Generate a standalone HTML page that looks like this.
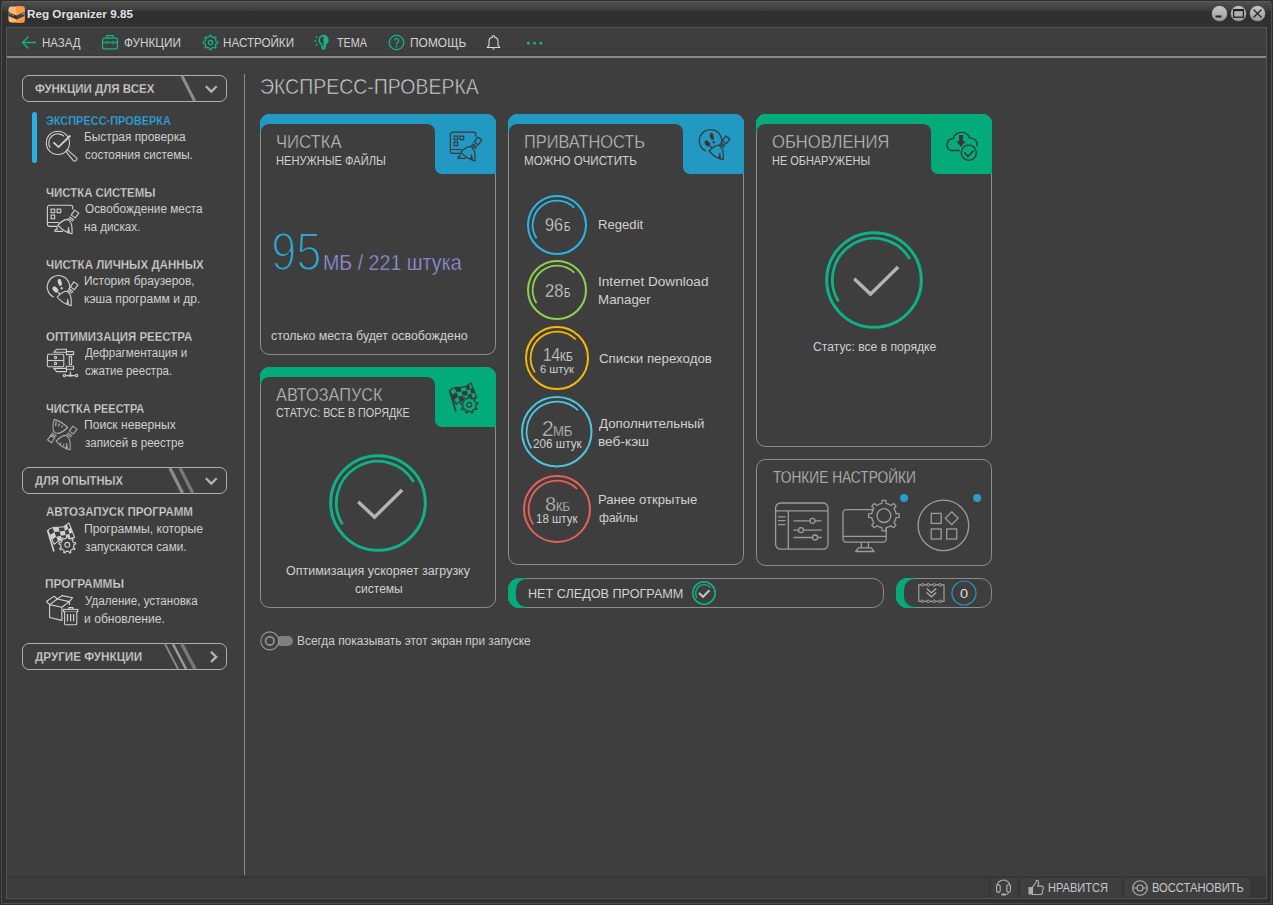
<!DOCTYPE html><html><head><meta charset="utf-8"><style>*{margin:0;padding:0;box-sizing:border-box}
html,body{width:1273px;height:905px;overflow:hidden;background:#303030;font-family:"Liberation Sans",sans-serif}
.a{position:absolute}
.t{position:absolute;white-space:nowrap;line-height:1}
svg{overflow:visible}
</style></head><body>
<div class="a" style="left:0px;top:0px;width:1273px;height:905px;background:#2c2c2c;border-radius:5px 5px 0 0"></div>
<div class="a" style="left:1px;top:1px;width:1271px;height:903px;background:#303030;border:1px solid #4c4c4c;border-radius:4px 4px 0 0"></div>
<div class="a" style="left:2px;top:1px;width:1269px;height:1px;background:#5a5a5a;border-radius:3px 3px 0 0"></div>
<div class="a" style="left:2px;top:2px;width:1269px;height:9px;background:linear-gradient(#505050,#3a3a3a)"></div>
<div class="a" style="left:6px;top:27px;width:1261px;height:872px;background:#3e3e3e;border:1px solid #545454"></div>
<svg class="a" style="left:8px;top:6px;" width="17" height="17" viewBox="0 0 17 17"><rect x="0.5" y="0.5" width="16" height="16" rx="3" fill="#ffb977"/>
<rect x="8.5" y="0.5" width="8" height="16" fill="#ff9a3c"/><path d="M8.5 0.5h5a3 3 0 0 1 3 3v10a3 3 0 0 1-3 3h-5z" fill="#ff9a3c"/>
<path d="M0.5 6 L8.5 9.5 L16.5 6 V10 L8.5 13.5 L0.5 10Z" fill="#3a3a3a"/>
<circle cx="2.5" cy="8" r="0.9" fill="#20c080"/><circle cx="5" cy="9.2" r="0.9" fill="#ff5040"/><circle cx="7" cy="10.2" r="0.7" fill="#222"/>
<circle cx="11" cy="10" r="0.6" fill="#666"/><circle cx="13" cy="9" r="0.6" fill="#666"/><circle cx="15" cy="8" r="0.9" fill="#30b0ff"/></svg>
<div class="t" style="left:27.40px;top:9.00px;font-size:11.0px;color:#dfe3e6;font-weight:bold;transform:scaleX(1.0630);transform-origin:0 0;">Reg Organizer 9.85</div>
<svg class="a" style="left:1211.0px;top:5px;" width="17" height="17" viewBox="0 0 17 17"><defs><linearGradient id="wg0" x1="0" y1="0" x2="0" y2="1"><stop offset="0" stop-color="#c8c8c8"/><stop offset="1" stop-color="#9a9a9a"/></linearGradient></defs><circle cx="8.5" cy="8.5" r="8" fill="url(#wg0)" stroke="#2a2a2a" stroke-width="0.6"/></svg>
<svg class="a" style="left:1230.0px;top:5px;" width="17" height="17" viewBox="0 0 17 17"><defs><linearGradient id="wg1" x1="0" y1="0" x2="0" y2="1"><stop offset="0" stop-color="#c8c8c8"/><stop offset="1" stop-color="#9a9a9a"/></linearGradient></defs><circle cx="8.5" cy="8.5" r="8" fill="url(#wg1)" stroke="#2a2a2a" stroke-width="0.6"/></svg>
<svg class="a" style="left:1249.0px;top:5px;" width="17" height="17" viewBox="0 0 17 17"><defs><linearGradient id="wg2" x1="0" y1="0" x2="0" y2="1"><stop offset="0" stop-color="#c8c8c8"/><stop offset="1" stop-color="#9a9a9a"/></linearGradient></defs><circle cx="8.5" cy="8.5" r="8" fill="url(#wg2)" stroke="#2a2a2a" stroke-width="0.6"/></svg>
<svg class="a" style="left:1211px;top:5px;" width="17" height="17" viewBox="0 0 17 17"><rect x="4.5" y="10.5" width="6" height="2" fill="#222"/></svg>
<svg class="a" style="left:1230px;top:5px;" width="17" height="17" viewBox="0 0 17 17"><rect x="3.6" y="4.6" width="9.8" height="7.6" fill="none" stroke="#222" stroke-width="1.3"/><rect x="3.6" y="4.6" width="9.8" height="1.6" fill="#222"/></svg>
<svg class="a" style="left:1249px;top:5px;" width="17" height="17" viewBox="0 0 17 17"><path d="M4.5 4.5L12.5 12.5M12.5 4.5L4.5 12.5" stroke="#222" stroke-width="1.3"/></svg>
<div class="a" style="left:7px;top:55px;width:1259px;height:1px;background:#393939"></div>
<div class="a" style="left:7px;top:56px;width:1259px;height:2px;background:#8a8a8a"></div>
<svg class="a" style="left:21px;top:35px;" width="16" height="16" viewBox="0 0 16 16"><path d="M1.5 7.5H15M7.5 1.5L1.5 7.5L7.5 13.5" fill="none" stroke="#16b386" stroke-width="1.3"/></svg>
<div class="t" style="left:42.22px;top:36.00px;font-size:13.0px;color:#d2d2d2;transform:scaleX(0.8814);transform-origin:0 0;">НАЗАД</div>
<svg class="a" style="left:101px;top:33px;" width="18" height="17" viewBox="0 0 18 17"><rect x="1.6" y="5.1" width="14.8" height="10.8" rx="1.5" fill="none" stroke="#16b386" stroke-width="1.3"/><path d="M6 5V2.6h6V5" fill="none" stroke="#16b386" stroke-width="1.3"/><path d="M1.6 9.5H16.4" stroke="#16b386" stroke-width="1.3"/><circle cx="6" cy="9.5" r="1.2" fill="#3e3e3e" stroke="#16b386" stroke-width="1"/><circle cx="12" cy="9.5" r="1.2" fill="#3e3e3e" stroke="#16b386" stroke-width="1"/></svg>
<div class="t" style="left:124.00px;top:36.00px;font-size:13.0px;color:#d2d2d2;transform:scaleX(0.9048);transform-origin:0 0;">ФУНКЦИИ</div>
<svg class="a" style="left:202px;top:34px;" width="17" height="17" viewBox="0 0 17 17"><path d="M13.97 7.28 L15.64 7.54 L15.64 9.46 L13.97 9.72 L13.23 11.50 L14.22 12.87 L12.87 14.22 L11.50 13.23 L9.72 13.97 L9.46 15.64 L7.54 15.64 L7.28 13.97 L5.50 13.23 L4.13 14.22 L2.78 12.87 L3.77 11.50 L3.03 9.72 L1.36 9.46 L1.36 7.54 L3.03 7.28 L3.77 5.50 L2.78 4.13 L4.13 2.78 L5.50 3.77 L7.28 3.03 L7.54 1.36 L9.46 1.36 L9.72 3.03 L11.50 3.77 L12.87 2.78 L14.22 4.13 L13.23 5.50Z" fill="none" stroke="#16b386" stroke-width="1.2" stroke-linejoin="round"/><circle cx="8.5" cy="8.5" r="2.2" fill="none" stroke="#16b386" stroke-width="1.2"/></svg>
<div class="t" style="left:223.11px;top:36.00px;font-size:13.0px;color:#d2d2d2;transform:scaleX(0.8936);transform-origin:0 0;">НАСТРОЙКИ</div>
<svg class="a" style="left:313px;top:34px;" width="18" height="17" viewBox="0 0 18 17"><path d="M10.5 1.5a4.6 4.6 0 0 1 2.6 8.3c-.5.4-.8 1-.8 1.6V13h-3.6v-1.6c0-.6-.3-1.2-.8-1.6a4.6 4.6 0 0 1 2.6-8.3z" fill="none" stroke="#16b386" stroke-width="1.3"/><path d="M10.5 1.5a4.6 4.6 0 0 1 2.6 8.3c-.5.4-.8 1-.8 1.6V13h-1.8z" fill="#16b386"/><rect x="8.7" y="13.8" width="3.6" height="1.8" rx=".8" fill="#16b386"/><circle cx="3.5" cy="3" r=".9" fill="#16b386"/><circle cx="2.3" cy="7" r=".9" fill="#16b386"/><circle cx="3.5" cy="11" r=".9" fill="#16b386"/></svg>
<div class="t" style="left:337.00px;top:36.00px;font-size:13.0px;color:#d2d2d2;transform:scaleX(0.8333);transform-origin:0 0;">ТЕМА</div>
<svg class="a" style="left:388px;top:34px;" width="17" height="17" viewBox="0 0 17 17"><circle cx="8.5" cy="8.5" r="7.2" fill="none" stroke="#16b386" stroke-width="1.3"/><path d="M6.3 6.6a2.2 2.2 0 1 1 3.3 1.9c-.7.4-1.1.9-1.1 1.7v.6" fill="none" stroke="#16b386" stroke-width="1.3"/><circle cx="8.5" cy="12.6" r=".9" fill="#16b386"/></svg>
<div class="t" style="left:409.68px;top:36.00px;font-size:13.0px;color:#d2d2d2;transform:scaleX(0.9200);transform-origin:0 0;">ПОМОЩЬ</div>
<svg class="a" style="left:486px;top:34px;" width="15" height="17" viewBox="0 0 15 17"><path d="M7.5 1.5a1 1 0 0 1 1 1v.6a4.5 4.5 0 0 1 3.5 4.4v3.8l1.8 2.2H1.2L3 11.3V7.5a4.5 4.5 0 0 1 3.5-4.4v-.6a1 1 0 0 1 1-1z" fill="none" stroke="#d8d8d8" stroke-width="1.1" stroke-linejoin="round"/><path d="M6 14.5h3l-1.5 1.6z" fill="#d8d8d8"/></svg>
<svg class="a" style="left:524px;top:38px;" width="22" height="10" viewBox="0 0 22 10"><circle cx="4.2999999999999545" cy="5.2" r="1.45" fill="#16b386"/><circle cx="10.600000000000023" cy="5.2" r="1.45" fill="#16b386"/><circle cx="16.899999999999977" cy="5.2" r="1.45" fill="#16b386"/></svg>
<div class="a" style="left:244px;top:74px;width:1px;height:801px;background:#8a8a8a"></div>
<div class="a" style="left:22px;top:75px;width:205px;height:27px;border:1px solid #b0b0b0;border-radius:7px"></div>
<div class="t" style="left:35.40px;top:82.00px;font-size:13.0px;color:#d6d6d6;font-weight:bold;-webkit-text-stroke:0.3px #3e3e3e;transform:scaleX(0.8859);transform-origin:0 0;">ФУНКЦИИ ДЛЯ ВСЕХ</div>
<svg class="a" style="left:22px;top:75px;" width="205" height="27" viewBox="0 0 205 27"><path d="M160 1L172.6 26" stroke="#8c8c8c" stroke-width="3"/><path d="M183.9 11.299999999999997L189.3 16.599999999999994L194.7 11.299999999999997" fill="none" stroke="#b4b4b4" stroke-width="2.3"/></svg>
<div class="a" style="left:22px;top:467px;width:205px;height:27px;border:1px solid #b0b0b0;border-radius:7px"></div>
<div class="t" style="left:35.40px;top:474.00px;font-size:13.0px;color:#d6d6d6;font-weight:bold;-webkit-text-stroke:0.3px #3e3e3e;transform:scaleX(0.8592);transform-origin:0 0;">ДЛЯ ОПЫТНЫХ</div>
<svg class="a" style="left:22px;top:467px;" width="205" height="27" viewBox="0 0 205 27"><path d="M147.9 1L160.5 26" stroke="#8c8c8c" stroke-width="3.2"/><path d="M158 1L170.7 26" stroke="#787878" stroke-width="3.2"/><path d="M183.9 11.299999999999997L189.3 16.599999999999994L194.7 11.299999999999997" fill="none" stroke="#b4b4b4" stroke-width="2.3"/></svg>
<div class="a" style="left:22px;top:643px;width:205px;height:27px;border:1px solid #b0b0b0;border-radius:7px"></div>
<div class="t" style="left:35.40px;top:650.00px;font-size:13.0px;color:#d6d6d6;font-weight:bold;-webkit-text-stroke:0.3px #3e3e3e;transform:scaleX(0.8992);transform-origin:0 0;">ДРУГИЕ ФУНКЦИИ</div>
<svg class="a" style="left:22px;top:643px;" width="205" height="27" viewBox="0 0 205 27"><path d="M143 1L156 26" stroke="#8a8a8a" stroke-width="1.8"/><path d="M151 1L164 26" stroke="#9a9a9a" stroke-width="2.5"/><path d="M159.8 1L173 26" stroke="#777777" stroke-width="3.5"/><path d="M189 8.799999999999955L194.2 13.899999999999977L189 18.899999999999977" fill="none" stroke="#b4b4b4" stroke-width="2.3"/></svg>
<div class="a" style="left:32px;top:112px;width:5px;height:51px;background:#29aee6;border-radius:3px"></div>
<div class="t" style="left:46.30px;top:114.00px;font-size:13.0px;color:#2aa9e3;font-weight:bold;-webkit-text-stroke:0.3px #3e3e3e;transform:scaleX(0.8426);transform-origin:0 0;">ЭКСПРЕСС-ПРОВЕРКА</div>
<div class="t" style="left:83.55px;top:131.00px;font-size:12.5px;color:#cfcfcf;transform:scaleX(0.9500);transform-origin:0 0;">Быстрая проверка</div>
<div class="t" style="left:84.50px;top:149.00px;font-size:12.5px;color:#cfcfcf;transform:scaleX(0.9284);transform-origin:0 0;">состояния системы.</div>
<div class="t" style="left:46.30px;top:186.00px;font-size:13.0px;color:#d6d6d6;font-weight:bold;-webkit-text-stroke:0.3px #3e3e3e;transform:scaleX(0.8790);transform-origin:0 0;">ЧИСТКА СИСТЕМЫ</div>
<div class="t" style="left:84.50px;top:203.00px;font-size:12.5px;color:#cfcfcf;transform:scaleX(0.9440);transform-origin:0 0;">Освобождение места</div>
<div class="t" style="left:83.56px;top:221.00px;font-size:12.5px;color:#cfcfcf;transform:scaleX(0.9356);transform-origin:0 0;">на дисках.</div>
<div class="t" style="left:46.30px;top:258.00px;font-size:13.0px;color:#d6d6d6;font-weight:bold;-webkit-text-stroke:0.3px #3e3e3e;transform:scaleX(0.8899);transform-origin:0 0;">ЧИСТКА ЛИЧНЫХ ДАННЫХ</div>
<div class="t" style="left:83.54px;top:275.00px;font-size:12.5px;color:#cfcfcf;transform:scaleX(0.9561);transform-origin:0 0;">История браузеров,</div>
<div class="t" style="left:83.53px;top:293.00px;font-size:12.5px;color:#cfcfcf;transform:scaleX(0.9664);transform-origin:0 0;">кэша программ и др.</div>
<div class="t" style="left:46.30px;top:330.00px;font-size:13.0px;color:#d6d6d6;font-weight:bold;-webkit-text-stroke:0.3px #3e3e3e;transform:scaleX(0.8795);transform-origin:0 0;">ОПТИМИЗАЦИЯ РЕЕСТРА</div>
<div class="t" style="left:84.50px;top:347.00px;font-size:12.5px;color:#cfcfcf;transform:scaleX(0.9243);transform-origin:0 0;">Дефрагментация и</div>
<div class="t" style="left:84.50px;top:365.00px;font-size:12.5px;color:#cfcfcf;transform:scaleX(0.9191);transform-origin:0 0;">сжатие реестра.</div>
<div class="t" style="left:46.30px;top:402.00px;font-size:13.0px;color:#d6d6d6;font-weight:bold;-webkit-text-stroke:0.3px #3e3e3e;transform:scaleX(0.8448);transform-origin:0 0;">ЧИСТКА РЕЕСТРА</div>
<div class="t" style="left:83.53px;top:419.00px;font-size:12.5px;color:#cfcfcf;transform:scaleX(0.9710);transform-origin:0 0;">Поиск неверных</div>
<div class="t" style="left:84.50px;top:437.00px;font-size:12.5px;color:#cfcfcf;transform:scaleX(0.9252);transform-origin:0 0;">записей в реестре</div>
<div class="t" style="left:46.30px;top:505.00px;font-size:13.0px;color:#d6d6d6;font-weight:bold;-webkit-text-stroke:0.3px #3e3e3e;transform:scaleX(0.8873);transform-origin:0 0;">АВТОЗАПУСК ПРОГРАММ</div>
<div class="t" style="left:83.52px;top:523.00px;font-size:12.5px;color:#cfcfcf;transform:scaleX(0.9752);transform-origin:0 0;">Программы, которые</div>
<div class="t" style="left:84.50px;top:541.00px;font-size:12.5px;color:#cfcfcf;transform:scaleX(0.9411);transform-origin:0 0;">запускаются сами.</div>
<div class="t" style="left:45.39px;top:577.00px;font-size:13.0px;color:#d6d6d6;font-weight:bold;-webkit-text-stroke:0.3px #3e3e3e;transform:scaleX(0.9118);transform-origin:0 0;">ПРОГРАММЫ</div>
<div class="t" style="left:84.50px;top:595.00px;font-size:12.5px;color:#cfcfcf;transform:scaleX(0.9281);transform-origin:0 0;">Удаление, установка</div>
<div class="t" style="left:83.53px;top:613.00px;font-size:12.5px;color:#cfcfcf;transform:scaleX(0.9695);transform-origin:0 0;">и обновление.</div>
<div class="t" style="left:259.74px;top:75.00px;font-size:22.75px;color:#d4d4d4;-webkit-text-stroke:0.6px #3e3e3e;transform:scaleX(0.8559);transform-origin:0 0;">ЭКСПРЕСС-ПРОВЕРКА</div>
<svg class="a" style="left:260px;top:114px;" width="236" height="241" viewBox="0 0 236 241"><rect x="0.5" y="0.5" width="235" height="240" rx="9" fill="#3e3e3e" stroke="#8c8c8c" stroke-width="1"/><path d="M0 18V9A9 9 0 0 1 9 0H227A9 9 0 0 1 236 9V60H182A7 7 0 0 1 175 53V18A8 8 0 0 0 167 10H9A8 8 0 0 0 1 18Z" fill="#2299c2"/></svg>
<svg class="a" style="left:508px;top:114px;" width="236" height="451" viewBox="0 0 236 451"><rect x="0.5" y="0.5" width="235" height="450" rx="9" fill="#3e3e3e" stroke="#8c8c8c" stroke-width="1"/><path d="M0 18V9A9 9 0 0 1 9 0H227A9 9 0 0 1 236 9V60H182A7 7 0 0 1 175 53V18A8 8 0 0 0 167 10H9A8 8 0 0 0 1 18Z" fill="#2299c2"/></svg>
<svg class="a" style="left:756px;top:114px;" width="236" height="333" viewBox="0 0 236 333"><rect x="0.5" y="0.5" width="235" height="332" rx="9" fill="#3e3e3e" stroke="#8c8c8c" stroke-width="1"/><path d="M0 18V9A9 9 0 0 1 9 0H227A9 9 0 0 1 236 9V60H182A7 7 0 0 1 175 53V18A8 8 0 0 0 167 10H9A8 8 0 0 0 1 18Z" fill="#03aa7a"/></svg>
<svg class="a" style="left:260px;top:367px;" width="236" height="241" viewBox="0 0 236 241"><rect x="0.5" y="0.5" width="235" height="240" rx="9" fill="#3e3e3e" stroke="#8c8c8c" stroke-width="1"/><path d="M0 18V9A9 9 0 0 1 9 0H227A9 9 0 0 1 236 9V60H182A7 7 0 0 1 175 53V18A8 8 0 0 0 167 10H9A8 8 0 0 0 1 18Z" fill="#03aa7a"/></svg>
<svg class="a" style="left:756px;top:459px;" width="236" height="107" viewBox="0 0 236 107"><rect x="0.5" y="0.5" width="235" height="106" rx="9" fill="#3e3e3e" stroke="#8c8c8c" stroke-width="1"/></svg>
<div class="t" style="left:275.82px;top:132.00px;font-size:19.0px;color:#d0d0d0;-webkit-text-stroke:0.5px #3e3e3e;transform:scaleX(0.8784);transform-origin:0 0;">ЧИСТКА</div>
<div class="t" style="left:275.81px;top:155.00px;font-size:12.5px;color:#d0d0d0;transform:scaleX(0.8886);transform-origin:0 0;">НЕНУЖНЫЕ ФАЙЛЫ</div>
<div class="t" style="left:271.21px;top:225.00px;font-size:53.75px;color:#2ea6cf;-webkit-text-stroke:2px #3e3e3e;transform:scaleX(0.8464);transform-origin:0 0;">95</div>
<div class="t" style="left:322.91px;top:252.00px;font-size:22.0px;color:#a09cec;-webkit-text-stroke:0.5px #3e3e3e;transform:scaleX(0.8928);transform-origin:0 0;">МБ / 221 штука</div>
<div class="t" style="left:271.30px;top:329.00px;font-size:13.0px;color:#d0d0d0;transform:scaleX(0.9498);transform-origin:0 0;">столько места будет освобождено</div>
<div class="t" style="left:523.61px;top:133.00px;font-size:18.5px;color:#d0d0d0;-webkit-text-stroke:0.5px #3e3e3e;transform:scaleX(0.8853);transform-origin:0 0;">ПРИВАТНОСТЬ</div>
<div class="t" style="left:523.57px;top:155.00px;font-size:12.5px;color:#d0d0d0;transform:scaleX(0.9283);transform-origin:0 0;">МОЖНО ОЧИСТИТЬ</div>
<div class="t" style="left:771.50px;top:133.00px;font-size:18.5px;color:#d0d0d0;-webkit-text-stroke:0.5px #3e3e3e;transform:scaleX(0.8961);transform-origin:0 0;">ОБНОВЛЕНИЯ</div>
<div class="t" style="left:771.53px;top:155.00px;font-size:12.5px;color:#d0d0d0;transform:scaleX(0.8748);transform-origin:0 0;">НЕ ОБНАРУЖЕНЫ</div>
<div class="t" style="left:276.40px;top:386.00px;font-size:18.5px;color:#d0d0d0;-webkit-text-stroke:0.5px #3e3e3e;transform:scaleX(0.8826);transform-origin:0 0;">АВТОЗАПУСК</div>
<div class="t" style="left:276.40px;top:407.00px;font-size:12.5px;color:#d0d0d0;transform:scaleX(0.8613);transform-origin:0 0;">СТАТУС: ВСЕ В ПОРЯДКЕ</div>
<div class="t" style="left:286.00px;top:565.00px;font-size:12.5px;color:#d0d0d0;">Оптимизация ускоряет загрузку</div>
<div class="t" style="left:354.60px;top:582.00px;font-size:13.0px;color:#d0d0d0;transform:scaleX(0.9255);transform-origin:0 0;">системы</div>
<div class="t" style="left:812.70px;top:341.00px;font-size:12.5px;color:#d0d0d0;transform:scaleX(0.9717);transform-origin:0 0;">Статус: все в порядке</div>
<div class="t" style="left:773.20px;top:470.00px;font-size:16.0px;color:#d0d0d0;-webkit-text-stroke:0.4px #3e3e3e;transform:scaleX(0.8570);transform-origin:0 0;">ТОНКИЕ НАСТРОЙКИ</div>
<svg class="a" style="left:521.5px;top:189.5px;" width="70" height="70" viewBox="0 0 70 70"><circle cx="35.0" cy="35.0" r="29.0" fill="none" stroke="#29b7ea" stroke-width="2"/><path d="M52.25 17.75A24.4 24.4 0 0 0 14.54 48.29" fill="none" stroke="#29b7ea" stroke-width="1.8"/></svg>
<svg class="a" style="left:521.5px;top:255.39999999999998px;" width="70" height="70" viewBox="0 0 70 70"><circle cx="35.0" cy="35.0" r="29.0" fill="none" stroke="#8fd14f" stroke-width="2"/><path d="M52.25 17.75A24.4 24.4 0 0 0 14.54 48.29" fill="none" stroke="#8fd14f" stroke-width="1.8"/></svg>
<svg class="a" style="left:519.5px;top:321.4px;" width="74" height="74" viewBox="0 0 74 74"><circle cx="37.0" cy="37.0" r="31.0" fill="none" stroke="#f7b80c" stroke-width="2"/><path d="M55.67 18.33A26.4 26.4 0 0 0 14.86 51.38" fill="none" stroke="#f7b80c" stroke-width="1.8"/></svg>
<svg class="a" style="left:515.85px;top:391.45px;" width="81.5" height="81.5" viewBox="0 0 81.5 81.5"><circle cx="40.75" cy="40.75" r="34.75" fill="none" stroke="#4dc6de" stroke-width="2"/><path d="M62.07 19.43A30.15 30.15 0 0 0 15.46 57.17" fill="none" stroke="#4dc6de" stroke-width="1.8"/></svg>
<svg class="a" style="left:517.5px;top:469.5px;" width="78" height="78" viewBox="0 0 78 78"><circle cx="39.0" cy="39.0" r="33.0" fill="none" stroke="#e8605a" stroke-width="2"/><path d="M59.08 18.92A28.4 28.4 0 0 0 15.18 54.47" fill="none" stroke="#e8605a" stroke-width="1.8"/></svg>
<div class="t" style="left:544.94px;top:215.00px;font-size:19.0px;color:#cfcfcf;-webkit-text-stroke:0.3px #3e3e3e;transform:scaleX(0.8550);transform-origin:0 0;">96</div>
<div class="t" style="left:564.26px;top:220.00px;font-size:13.0px;color:#cfcfcf;transform:scaleX(0.7429);transform-origin:0 0;">Б</div>
<div class="t" style="left:544.52px;top:281.00px;font-size:19.0px;color:#cfcfcf;-webkit-text-stroke:0.3px #3e3e3e;transform:scaleX(0.8750);transform-origin:0 0;">28</div>
<div class="t" style="left:564.26px;top:286.00px;font-size:13.0px;color:#cfcfcf;transform:scaleX(0.7429);transform-origin:0 0;">Б</div>
<div class="t" style="left:542.58px;top:345.00px;font-size:19.0px;color:#cfcfcf;-webkit-text-stroke:0.3px #3e3e3e;transform:scaleX(0.8150);transform-origin:0 0;">14</div>
<div class="t" style="left:560.11px;top:350.00px;font-size:13.0px;color:#cfcfcf;transform:scaleX(0.7867);transform-origin:0 0;">КБ</div>
<div class="t" style="left:540.40px;top:364.00px;font-size:11.25px;color:#cfcfcf;transform:scaleX(0.9912);transform-origin:0 0;">6 штук</div>
<div class="t" style="left:541.80px;top:418.00px;font-size:21.75px;color:#cfcfcf;-webkit-text-stroke:0.55px #3e3e3e;">2</div>
<div class="t" style="left:553.10px;top:424.00px;font-size:14.5px;color:#cfcfcf;-webkit-text-stroke:0.3px #3e3e3e;transform:scaleX(0.9000);transform-origin:0 0;">МБ</div>
<div class="t" style="left:533.30px;top:438.00px;font-size:12.75px;color:#cfcfcf;transform:scaleX(0.9189);transform-origin:0 0;">206 штук</div>
<div class="t" style="left:544.90px;top:494.00px;font-size:20.0px;color:#cfcfcf;-webkit-text-stroke:0.5px #3e3e3e;">8</div>
<div class="t" style="left:555.83px;top:500.00px;font-size:13.0px;color:#cfcfcf;-webkit-text-stroke:0.25px #3e3e3e;transform:scaleX(0.8733);transform-origin:0 0;">КБ</div>
<div class="t" style="left:536.18px;top:513.00px;font-size:12.5px;color:#cfcfcf;transform:scaleX(0.9222);transform-origin:0 0;">18 штук</div>
<div class="t" style="left:598.39px;top:218.00px;font-size:13.0px;color:#d0d0d0;transform:scaleX(1.0091);transform-origin:0 0;">Regedit</div>
<div class="t" style="left:598.25px;top:275.00px;font-size:13.0px;color:#d0d0d0;transform:scaleX(1.0471);transform-origin:0 0;">Internet Download</div>
<div class="t" style="left:598.27px;top:293.00px;font-size:13.0px;color:#d0d0d0;transform:scaleX(1.0280);transform-origin:0 0;">Manager</div>
<div class="t" style="left:599.30px;top:352.00px;font-size:13.0px;color:#d0d0d0;transform:scaleX(1.0245);transform-origin:0 0;">Списки переходов</div>
<div class="t" style="left:599.00px;top:417.00px;font-size:13.0px;color:#d0d0d0;transform:scaleX(1.0252);transform-origin:0 0;">Дополнительный</div>
<div class="t" style="left:597.95px;top:435.00px;font-size:13.0px;color:#d0d0d0;transform:scaleX(1.0532);transform-origin:0 0;">веб-кэш</div>
<div class="t" style="left:597.99px;top:493.00px;font-size:13.0px;color:#d0d0d0;transform:scaleX(1.0082);transform-origin:0 0;">Ранее открытые</div>
<div class="t" style="left:599.00px;top:511.00px;font-size:13.0px;color:#d0d0d0;transform:scaleX(0.9262);transform-origin:0 0;">файлы</div>
<svg class="a" style="left:322.9px;top:447.7px;" width="110" height="110" viewBox="0 0 110 110"><circle cx="55.0" cy="55.0" r="47.3" fill="none" stroke="#0db386" stroke-width="3"/><path d="M90.76 33.94A41.5 41.5 0 1 0 19.43 76.37" fill="none" stroke="#0db386" stroke-width="2.8"/><path d="M35.2 53.8L51.5 69.1L79.1 42.0" fill="none" stroke="#b3b3b3" stroke-width="3.4"/></svg>
<svg class="a" style="left:819.0px;top:224.8px;" width="110" height="110" viewBox="0 0 110 110"><circle cx="55.0" cy="55.0" r="47.3" fill="none" stroke="#0db386" stroke-width="3"/><path d="M90.76 33.94A41.5 41.5 0 1 0 19.43 76.37" fill="none" stroke="#0db386" stroke-width="2.8"/><path d="M35.2 53.8L51.5 69.1L79.1 42.0" fill="none" stroke="#b3b3b3" stroke-width="3.4"/></svg>
<svg class="a" style="left:508px;top:578px;" width="376" height="30" viewBox="0 0 376 30"><rect x="0.5" y="0.5" width="375" height="29" rx="11" fill="#3e3e3e" stroke="#8c8c8c" stroke-width="1"/><defs><clipPath id="pc508"><rect x="0" y="0" width="18.5" height="30"/></clipPath></defs><path clip-path="url(#pc508)" fill-rule="evenodd" fill="#03aa7a" d="M11.5 0H364.5A11.5 11.5 0 0 1 376 11.5V18.5A11.5 11.5 0 0 1 364.5 30H11.5A11.5 11.5 0 0 1 0 18.5V11.5A11.5 11.5 0 0 1 11.5 0ZM18.5 1H373.5A10.5 10.5 0 0 1 384 11.5V18.5A10.5 10.5 0 0 1 373.5 29H18.5A10.5 10.5 0 0 1 8 18.5V11.5A10.5 10.5 0 0 1 18.5 1Z"/></svg>
<svg class="a" style="left:896px;top:578px;" width="96" height="30" viewBox="0 0 96 30"><rect x="0.5" y="0.5" width="95" height="29" rx="11" fill="#3e3e3e" stroke="#8c8c8c" stroke-width="1"/><defs><clipPath id="pc896"><rect x="0" y="0" width="18.5" height="30"/></clipPath></defs><path clip-path="url(#pc896)" fill-rule="evenodd" fill="#03aa7a" d="M11.5 0H84.5A11.5 11.5 0 0 1 96 11.5V18.5A11.5 11.5 0 0 1 84.5 30H11.5A11.5 11.5 0 0 1 0 18.5V11.5A11.5 11.5 0 0 1 11.5 0ZM18.5 1H93.5A10.5 10.5 0 0 1 104 11.5V18.5A10.5 10.5 0 0 1 93.5 29H18.5A10.5 10.5 0 0 1 8 18.5V11.5A10.5 10.5 0 0 1 18.5 1Z"/></svg>
<div class="t" style="left:528.45px;top:587.00px;font-size:13.25px;color:#d2d2d2;transform:scaleX(0.9528);transform-origin:0 0;">НЕТ СЛЕДОВ ПРОГРАММ</div>
<svg class="a" style="left:689px;top:577.6px;" width="30" height="30" viewBox="0 0 30 30"><circle cx="15" cy="15" r="11.2" fill="none" stroke="#0db386" stroke-width="1.6"/><path d="M21.43 9.60A8.4 8.4 0 0 0 8.12 19.82" fill="none" stroke="#0db386" stroke-width="1.4"/><path d="M10 15l4 3.8l6.5-6.5" fill="none" stroke="#c4c4c4" stroke-width="2"/></svg>
<svg class="a" style="left:915px;top:583px;" width="32" height="24" viewBox="0 0 32 24"><rect x="3.8" y="1.8" width="25.2" height="16.5" fill="none" stroke="#a8a8a8" stroke-width="1.1"/>
<path d="M11.6 5.6l4.8 4.2l4.8-4.2M11.6 9.6l4.8 4.2l4.8-4.2" fill="none" stroke="#a8a8a8" stroke-width="1.3"/>
<g fill="#3e3e3e" stroke="#a8a8a8" stroke-width="0.9"><circle cx="7.5" cy="1.8" r="1.3"/><circle cx="13.3" cy="1.8" r="1.3"/><circle cx="19.3" cy="1.8" r="1.3"/><circle cx="25.2" cy="1.8" r="1.3"/>
<circle cx="7.5" cy="18.3" r="1.3"/><circle cx="13.3" cy="18.3" r="1.3"/><circle cx="19.3" cy="18.3" r="1.3"/><circle cx="25.2" cy="18.3" r="1.3"/></g></svg>
<svg class="a" style="left:951px;top:580px;" width="26" height="26" viewBox="0 0 26 26"><circle cx="13" cy="13" r="12" fill="none" stroke="#2a95c0" stroke-width="1.2"/></svg>
<div class="t" style="left:959.50px;top:588.00px;font-size:12.75px;color:#dcdcdc;transform:scaleX(1.1429);transform-origin:0 0;">0</div>
<svg class="a" style="left:258px;top:629px;" width="40" height="24" viewBox="0 0 40 24"><rect x="18" y="7" width="17" height="10" rx="5" fill="#808080"/><circle cx="11.8" cy="11.9" r="9" fill="#3e3e3e" stroke="#9a9a9a" stroke-width="1.1"/><circle cx="11.8" cy="11.9" r="4.2" fill="none" stroke="#8a8a8a" stroke-width="2"/></svg>
<div class="t" style="left:297.35px;top:635.00px;font-size:12.5px;color:#cccccc;transform:scaleX(0.9520);transform-origin:0 0;">Всегда показывать этот экран при запуске</div>
<div class="a" style="left:7px;top:876px;width:1259px;height:2px;background:#363636"></div>
<div class="a" style="left:7px;top:878px;width:1259px;height:19px;background:#3c3c3c"></div>
<div class="a" style="left:7px;top:897px;width:1259px;height:1px;background:#373737"></div>
<div class="a" style="left:989px;top:878px;width:2px;height:19px;background:#363636"></div>
<div class="a" style="left:1017px;top:878px;width:3px;height:19px;background:#373737"></div>
<div class="a" style="left:1121px;top:878px;width:3px;height:19px;background:#373737"></div>
<div class="a" style="left:1250px;top:878px;width:16px;height:19px;background:#363636"></div>
<div class="a" style="left:993px;top:878px;width:24px;height:19px;background:#3f3f3f"></div>
<div class="a" style="left:1020px;top:878px;width:101px;height:19px;background:#3f3f3f"></div>
<div class="a" style="left:1124px;top:878px;width:126px;height:19px;background:#3f3f3f"></div>
<svg class="a" style="left:993px;top:878px;" width="24" height="19" viewBox="0 0 24 19"><path d="M4 9.5V8.2a6.5 6.2 0 0 1 13 0v1.3" fill="none" stroke="#b4b4b4" stroke-width="1.1"/><rect x="3.6" y="6.8" width="3.6" height="7.6" rx="1.8" fill="#3f3f3f" stroke="#b4b4b4" stroke-width="1.1"/><rect x="13.8" y="6.8" width="3.6" height="7.6" rx="1.8" fill="#3f3f3f" stroke="#b4b4b4" stroke-width="1.1"/><path d="M15.6 14.4c0 1.4-1.6 2.2-3.6 2.2" fill="none" stroke="#b4b4b4" stroke-width="1"/><rect x="8.4" y="15.6" width="4.4" height="1.8" rx=".6" fill="#b4b4b4"/></svg>
<svg class="a" style="left:1027px;top:879px;" width="18" height="17" viewBox="0 0 18 17"><rect x="1.5" y="8" width="4" height="7.5" fill="#aaaaaa"/><path d="M5.5 15.5V8.3l3.3-4.6c.3-.5.5-1 .5-1.6V1.3c1.5 0 2.4 1 2.4 2.5c0 1-.4 2.2-.9 3.3h4c1 0 1.7.9 1.5 1.9l-1.2 5.3c-.2.7-.8 1.2-1.5 1.2z" fill="none" stroke="#b0b0b0" stroke-width="1.1"/></svg>
<div class="t" style="left:1048.05px;top:881.00px;font-size:13.0px;color:#c4c8cc;transform:scaleX(0.8493);transform-origin:0 0;">НРАВИТСЯ</div>
<svg class="a" style="left:1131px;top:879px;" width="18" height="18" viewBox="0 0 18 18"><circle cx="9" cy="9" r="7.3" fill="none" stroke="#b0b0b0" stroke-width="1.1"/><circle cx="9" cy="9" r="3" fill="none" stroke="#b0b0b0" stroke-width="1.1"/><path d="M1.7 9h4.3M12 9h4.3" stroke="#b0b0b0" stroke-width="1.1"/></svg>
<div class="t" style="left:1152.14px;top:881.00px;font-size:13.0px;color:#c4c8cc;transform:scaleX(0.8600);transform-origin:0 0;">ВОССТАНОВИТЬ</div>
<svg class="a" style="left:0px;top:0px;" width="1" height="1" viewBox="0 0 1 1"></svg>
<svg class="a" style="left:0px;top:0px;" width="1273" height="905" viewBox="0 0 1273 905"><g fill="none" stroke="#9c9c9c" stroke-width="1.3">
<rect x="775.6" y="503" width="52.4" height="46.2" rx="5"/>
<path d="M775.6 510.9H828M788.3 510.9V549.2M778 516.8h7.4M778 520.6h7.4M778 524.6h7.4M793.5 520.8h28.2M793.5 530.1h28.2M793.5 537.5h28.2"/>
</g>
<g fill="#3e3e3e" stroke="#9c9c9c" stroke-width="1.3"><circle cx="812.5" cy="520.8" r="2.5"/><circle cx="801" cy="530.1" r="2.5"/><circle cx="815.1" cy="537.5" r="2.5"/></g>
<g fill="none" stroke="#9c9c9c" stroke-width="1.3">
<rect x="843" y="509.6" width="43.2" height="32.6" rx="3.5"/>
<path d="M843 536.3H886.2M861.3 542.2v5.7M868.4 542.2v5.7M855.8 551.5l2.6-3.6h13l2.6 3.6z"/>
</g><path d="M879.19 504.24 L881.79 503.48 L882.09 500.31 L885.71 500.31 L886.01 503.48 L888.61 504.24 L888.61 504.24 L890.97 505.54 L893.43 503.51 L895.99 506.07 L893.96 508.53 L895.26 510.89 L895.26 510.89 L896.02 513.49 L899.19 513.79 L899.19 517.41 L896.02 517.71 L895.26 520.31 L895.26 520.31 L893.96 522.67 L895.99 525.13 L893.43 527.69 L890.97 525.66 L888.61 526.96 L888.61 526.96 L886.01 527.72 L885.71 530.89 L882.09 530.89 L881.79 527.72 L879.19 526.96 L879.19 526.96 L876.83 525.66 L874.37 527.69 L871.81 525.13 L873.84 522.67 L872.54 520.31 L872.54 520.31 L871.78 517.71 L868.61 517.41 L868.61 513.79 L871.78 513.49 L872.54 510.89 L872.54 510.89 L873.84 508.53 L871.81 506.07 L874.37 503.51 L876.83 505.54 L879.19 504.24Z" fill="#3e3e3e" stroke="#9c9c9c" stroke-width="1.3" stroke-linejoin="round"/><circle cx="883.9" cy="515.6" r="6.9" fill="none" stroke="#9c9c9c" stroke-width="1.3"/><g fill="none" stroke="#9c9c9c" stroke-width="1.3"><circle cx="943.4" cy="525.4" r="25.3"/>
<rect x="931.2" y="513.4" width="10" height="10"/><rect x="931.2" y="529" width="10" height="10"/><rect x="946.7" y="529" width="10" height="10"/>
<path d="M951.7 511.8l6.4 6.4l-6.4 6.4l-6.4-6.4z"/></g>
<circle cx="904.1" cy="498.1" r="4" fill="#2b9ccc"/><circle cx="977.1" cy="498.1" r="4" fill="#2b9ccc"/></svg>
<svg class="a" style="left:42px;top:128px;" width="40" height="36" viewBox="0 0 40 36"><circle cx="15.9" cy="14.9" r="11.6" fill="none" stroke="#d0d0d0" stroke-width="1.1"/><path d="M22.33 8.47A9.1 9.1 0 0 0 8.18 19.72" fill="none" stroke="#d0d0d0" stroke-width="1.1"/><path d="M11.5 14.3L16.5 19.1L28.4 7.5" fill="none" stroke="#d0d0d0" stroke-width="1.8"/><path d="M23.8 23.4l1.6-1.6l9 7.8c.7.6.7 1.6 .1 2.2l-1 1c-.6.6-1.6.6-2.2-.1z" fill="none" stroke="#d0d0d0" stroke-width="1.1" stroke-linejoin="round"/></svg>
<svg class="a" style="left:42px;top:200px;" width="40" height="36" viewBox="0 0 40 36"><path d="M30.8 9.6V7.4a2.2 2.2 0 0 0-2.2-2.2H7.6a2.2 2.2 0 0 0-2.2 2.2V24.2a2.2 2.2 0 0 0 2.2 2.2H15.4M5.4 22.5H17M15 26.4v3.1h-1.2q-.8 0-.8 .8v1.1H21" fill="none" stroke="#d0d0d0" stroke-width="1.1"/><rect x="9.1" y="9.1" width="3.6" height="3.6" fill="none" stroke="#d0d0d0" stroke-width="1.1"/><rect x="15.1" y="9.1" width="3.6" height="3.6" fill="none" stroke="#d0d0d0" stroke-width="1.1"/><rect x="9.1" y="15.1" width="3.6" height="3.6" fill="none" stroke="#d0d0d0" stroke-width="1.1"/><path d="M32.6 10.1l4.2 3l-3.6 4.8l-4 -2.8z" fill="none" stroke="#d0d0d0" stroke-width="1.1" stroke-linejoin="round"/><path d="M27.3 16.7l4.8 3.3M26.3 18.1l4.8 3.3" stroke="#d0d0d0" stroke-width="1.1"/><path d="M15.900000000000002 25.2C19.6 21.1 22.6 19.4 26.0 19.4C29.1 21.7 30.400000000000002 24.1 30.0 33.8C24.6 32.9 20.1 30.1 15.900000000000002 25.2z" fill="none" stroke="#d0d0d0" stroke-width="1.1" stroke-linejoin="round"/><path d="M26.6 27.1L25.400000000000002 32.4L27.6 32.7z" fill="#d0d0d0" stroke="#d0d0d0" stroke-width="0.6"/></svg>
<svg class="a" style="left:42px;top:272px;" width="40" height="36" viewBox="0 0 40 36"><path d="M27.25 18.39A11.3 11.3 0 1 0 11.72 25.14" fill="none" stroke="#d0d0d0" stroke-width="1.1"/><ellipse cx="17.8" cy="10.4" rx="1.9" ry="3.6" transform="rotate(-14 17.8 10.4)" fill="#d0d0d0"/><ellipse cx="19.7" cy="16.3" rx="1.1" ry="1.2" fill="#d0d0d0"/><ellipse cx="13.4" cy="17.5" rx="2.2" ry="3.5" transform="rotate(-42 13.4 17.5)" fill="#d0d0d0"/><path d="M16.2 20.4l1.6 1.4" stroke="#d0d0d0" stroke-width="1.5"/><path d="M31.8 9.9l4.2 3l-3.6 4.8l-4 -2.8z" fill="none" stroke="#d0d0d0" stroke-width="1.1" stroke-linejoin="round"/><path d="M26.5 16.5l4.8 3.3M25.5 17.9l4.8 3.3" stroke="#d0d0d0" stroke-width="1.1"/><path d="M15.100000000000001 25.0C18.8 20.9 21.8 19.200000000000003 25.200000000000003 19.200000000000003C28.3 21.5 29.6 23.9 29.2 33.6C23.8 32.7 19.3 29.9 15.100000000000001 25.0z" fill="none" stroke="#d0d0d0" stroke-width="1.1" stroke-linejoin="round"/><path d="M25.8 26.9L24.6 32.2L26.8 32.5z" fill="#d0d0d0" stroke="#d0d0d0" stroke-width="0.6"/></svg>
<svg class="a" style="left:42px;top:344px;" width="40" height="36" viewBox="0 0 40 36"><rect x="5.4" y="10.3" width="16.4" height="12.5" rx="1.6" fill="none" stroke="#d0d0d0" stroke-width="1.1"/><path d="M5.4 16.5H21.8" stroke="#d0d0d0" stroke-width="1.1"/><circle cx="13.5" cy="13.5" r="1.1" fill="none" stroke="#d0d0d0" stroke-width="1.1"/><circle cx="13.5" cy="19.5" r="1.1" fill="none" stroke="#d0d0d0" stroke-width="1.1"/><path d="M11.7 8.3L14.6 5.3H24.5V7.6H31.6V10.6H24.3V8.3Z" fill="none" stroke="#d0d0d0" stroke-width="1.1" stroke-linejoin="round"/><path d="M11.7 24.4L14.6 27.6H24.5V25.3H31.6V22.3H24.3V24.4Z" fill="none" stroke="#d0d0d0" stroke-width="1.1" stroke-linejoin="round"/><rect x="27.3" y="12.4" width="2.3" height="8.3" rx=".8" fill="none" stroke="#d0d0d0" stroke-width="1.1"/><path d="M28.4 27.6v3M23.4 31.6H33.6" stroke="#d0d0d0" stroke-width="1.1"/><rect x="26.4" y="30.4" width="4" height="2.2" rx=".6" fill="#d0d0d0"/><circle cx="22.4" cy="31.6" r="1.2" fill="#3e3e3e" stroke="#d0d0d0" stroke-width="1.1"/><circle cx="34.6" cy="31.6" r="1.2" fill="#3e3e3e" stroke="#d0d0d0" stroke-width="1.1"/></svg>
<svg class="a" style="left:42px;top:416px;" width="40" height="36" viewBox="0 0 40 36"><path d="M12.3 3.4C11 6.5 10.6 10.5 11.1 13.9C12.3 16.4 14 17.4 16.2 17.4C19.5 16.6 23 14.2 25.8 11.5C21.5 7.6 17 4.8 12.3 3.4Z" fill="none" stroke="#a8a8a8" stroke-width="1.1" stroke-linejoin="round"/><path d="M14.2 5.5l-.6 4.4M17.3 7.5l-.8 3M20.5 9.5l-.9 2" stroke="#a8a8a8" stroke-width="1.3"/><path d="M9.7 16.7l4.8 3.3M8.8 18.1l4.8 3.3" stroke="#a8a8a8" stroke-width="1.1"/><path d="M9 19.2l3.5 2.8l-3 4.8l-4 -3z" fill="none" stroke="#a8a8a8" stroke-width="1.1" stroke-linejoin="round"/><path d="M30.8 10.1l4.2 3l-3.6 4.8l-4 -2.8z" fill="none" stroke="#a8a8a8" stroke-width="1.1" stroke-linejoin="round"/><path d="M25.5 16.7l4.8 3.3M24.5 18.1l4.8 3.3" stroke="#a8a8a8" stroke-width="1.1"/><path d="M14.100000000000001 25.2C17.8 21.1 20.8 19.4 24.200000000000003 19.4C27.3 21.7 28.6 24.1 28.2 33.8C22.8 32.9 18.3 30.1 14.100000000000001 25.2z" fill="none" stroke="#a8a8a8" stroke-width="1.1" stroke-linejoin="round"/><path d="M24.8 27.1L23.6 32.4L25.8 32.7z" fill="#a8a8a8" stroke="#a8a8a8" stroke-width="0.6"/><path d="M18 28.2l1.2-1.6M21 29.8l1.3-2" stroke="#a8a8a8" stroke-width="1.1"/></svg>
<svg class="a" style="left:42px;top:520px;" width="40" height="36" viewBox="0 0 40 36"><path d="M5.6 10.6L11.9 31.6" stroke="#d0d0d0" stroke-width="1.7"/><path d="M5.6 10.6C8 8.2 10.5 7.4 14 7.3C18 7.2 21 7.8 23 6C24.5 4.8 25.6 3.8 26.8 2.8L32.6 17.3C29 19 26 19 22 19.5C18 20 15 21.7 12.2 24.3Z" fill="none" stroke="#d0d0d0" stroke-width="1.1" stroke-linejoin="round"/><path d="M10.50 7.50 L16.50 7.20 L17.67 11.47 L12.33 12.07Z" fill="#d0d0d0"/><path d="M22.00 6.40 L25.00 4.20 L26.17 9.00 L22.83 10.70Z" fill="#d0d0d0"/><path d="M7.80 15.17 L12.33 12.07 L14.17 16.63 L10.00 19.73Z" fill="#d0d0d0"/><path d="M17.67 11.47 L22.83 10.70 L23.67 15.00 L18.83 15.73Z" fill="#d0d0d0"/><path d="M26.17 9.00 L28.73 7.63 L30.67 12.47 L27.33 13.80Z" fill="#d0d0d0"/><path d="M14.17 16.63 L18.83 15.73 L20.00 20.00 L16.00 21.20Z" fill="#d0d0d0"/><path d="M23.67 15.00 L27.33 13.80 L28.50 18.60 L24.50 19.30Z" fill="#d0d0d0"/><path d="M23.04 18.60 L24.38 18.26 L24.53 16.33 L26.07 16.33 L26.22 18.26 L27.56 18.60 L27.56 18.60 L28.80 19.20 L30.15 17.82 L31.33 18.81 L30.20 20.38 L31.02 21.50 L31.02 21.50 L31.58 22.76 L33.50 22.57 L33.77 24.09 L31.90 24.57 L31.80 25.95 L31.80 25.95 L31.42 27.27 L33.02 28.37 L32.25 29.70 L30.50 28.86 L29.54 29.86 L29.54 29.86 L28.40 30.63 L28.92 32.49 L27.47 33.02 L26.67 31.26 L25.30 31.40 L25.30 31.40 L23.93 31.26 L23.13 33.02 L21.68 32.49 L22.20 30.63 L21.06 29.86 L21.06 29.86 L20.10 28.86 L18.35 29.70 L17.58 28.37 L19.18 27.27 L18.80 25.95 L18.80 25.95 L18.70 24.57 L16.83 24.09 L17.10 22.57 L19.02 22.76 L19.58 21.50 L19.58 21.50 L20.40 20.38 L19.27 18.81 L20.45 17.82 L21.80 19.20 L23.04 18.60Z" fill="#3e3e3e" stroke="#d0d0d0" stroke-width="1.1" stroke-linejoin="round"/><circle cx="25.3" cy="24.8" r="2.4" fill="none" stroke="#d0d0d0" stroke-width="1.1"/></svg>
<svg class="a" style="left:42px;top:592px;" width="40" height="36" viewBox="0 0 40 36"><path d="M7.6 12.6V25.5L19.9 28.4V15.2L7.6 12.6ZM19.9 15.2L27.4 9.6L15.3 7L7.6 12.6M4.4 9.5L12.2 4.1L15.3 7M4.4 9.5L7.6 12.6M15.3 7L19.9 3.6L30.6 5.7L27.4 9.6M27.4 9.6V13" fill="none" stroke="#d0d0d0" stroke-width="1.1" stroke-linejoin="round"/><rect x="21.6" y="17.4" width="14.2" height="2.2" fill="#3e3e3e" stroke="#d0d0d0" stroke-width="1.1"/><path d="M26.9 17.4v-1.8h3.9v1.8" fill="none" stroke="#d0d0d0" stroke-width="1.1"/><path d="M22.6 19.6V31.4q0 1.3 1.3 1.3H33.5q1.3 0 1.3-1.3V19.6" fill="#3e3e3e" stroke="#d0d0d0" stroke-width="1.1"/><path d="M25.5 22v7.2M28.6 22v7.2M31.6 22v7.2" stroke="#d0d0d0" stroke-width="1.2"/></svg>
<svg class="a" style="left:445.2px;top:127.1px;" width="40" height="36" viewBox="0 0 40 36"><path d="M30.8 9.6V7.4a2.2 2.2 0 0 0-2.2-2.2H7.6a2.2 2.2 0 0 0-2.2 2.2V24.2a2.2 2.2 0 0 0 2.2 2.2H15.4M5.4 22.5H17M15 26.4v3.1h-1.2q-.8 0-.8 .8v1.1H21" fill="none" stroke="#383838" stroke-width="1.2"/><rect x="9.1" y="9.1" width="3.6" height="3.6" fill="none" stroke="#383838" stroke-width="1.2"/><rect x="15.1" y="9.1" width="3.6" height="3.6" fill="none" stroke="#383838" stroke-width="1.2"/><rect x="9.1" y="15.1" width="3.6" height="3.6" fill="none" stroke="#383838" stroke-width="1.2"/><path d="M32.6 10.1l4.2 3l-3.6 4.8l-4 -2.8z" fill="none" stroke="#383838" stroke-width="1.2" stroke-linejoin="round"/><path d="M27.3 16.7l4.8 3.3M26.3 18.1l4.8 3.3" stroke="#383838" stroke-width="1.2"/><path d="M15.900000000000002 25.2C19.6 21.1 22.6 19.4 26.0 19.4C29.1 21.7 30.400000000000002 24.1 30.0 33.8C24.6 32.9 20.1 30.1 15.900000000000002 25.2z" fill="none" stroke="#383838" stroke-width="1.2" stroke-linejoin="round"/><path d="M26.6 27.1L25.400000000000002 32.4L27.6 32.7z" fill="#383838" stroke="#383838" stroke-width="0.6"/></svg>
<svg class="a" style="left:694.2px;top:126.4px;" width="40" height="36" viewBox="0 0 40 36"><path d="M27.25 18.39A11.3 11.3 0 1 0 11.72 25.14" fill="none" stroke="#383838" stroke-width="1.2"/><ellipse cx="17.8" cy="10.4" rx="1.9" ry="3.6" transform="rotate(-14 17.8 10.4)" fill="#383838"/><ellipse cx="19.7" cy="16.3" rx="1.1" ry="1.2" fill="#383838"/><ellipse cx="13.4" cy="17.5" rx="2.2" ry="3.5" transform="rotate(-42 13.4 17.5)" fill="#383838"/><path d="M16.2 20.4l1.6 1.4" stroke="#383838" stroke-width="1.5"/><path d="M31.8 9.9l4.2 3l-3.6 4.8l-4 -2.8z" fill="none" stroke="#383838" stroke-width="1.2" stroke-linejoin="round"/><path d="M26.5 16.5l4.8 3.3M25.5 17.9l4.8 3.3" stroke="#383838" stroke-width="1.2"/><path d="M15.100000000000001 25.0C18.8 20.9 21.8 19.200000000000003 25.200000000000003 19.200000000000003C28.3 21.5 29.6 23.9 29.2 33.6C23.8 32.7 19.3 29.9 15.100000000000001 25.0z" fill="none" stroke="#383838" stroke-width="1.2" stroke-linejoin="round"/><path d="M25.8 26.9L24.6 32.2L26.8 32.5z" fill="#383838" stroke="#383838" stroke-width="0.6"/></svg>
<svg class="a" style="left:444.1px;top:379.8px;" width="40" height="36" viewBox="0 0 40 36"><path d="M5.6 10.6L11.9 31.6" stroke="#383838" stroke-width="1.7"/><path d="M5.6 10.6C8 8.2 10.5 7.4 14 7.3C18 7.2 21 7.8 23 6C24.5 4.8 25.6 3.8 26.8 2.8L32.6 17.3C29 19 26 19 22 19.5C18 20 15 21.7 12.2 24.3Z" fill="none" stroke="#383838" stroke-width="1.2" stroke-linejoin="round"/><path d="M10.50 7.50 L16.50 7.20 L17.67 11.47 L12.33 12.07Z" fill="#383838"/><path d="M22.00 6.40 L25.00 4.20 L26.17 9.00 L22.83 10.70Z" fill="#383838"/><path d="M7.80 15.17 L12.33 12.07 L14.17 16.63 L10.00 19.73Z" fill="#383838"/><path d="M17.67 11.47 L22.83 10.70 L23.67 15.00 L18.83 15.73Z" fill="#383838"/><path d="M26.17 9.00 L28.73 7.63 L30.67 12.47 L27.33 13.80Z" fill="#383838"/><path d="M14.17 16.63 L18.83 15.73 L20.00 20.00 L16.00 21.20Z" fill="#383838"/><path d="M23.67 15.00 L27.33 13.80 L28.50 18.60 L24.50 19.30Z" fill="#383838"/><path d="M23.04 18.60 L24.38 18.26 L24.53 16.33 L26.07 16.33 L26.22 18.26 L27.56 18.60 L27.56 18.60 L28.80 19.20 L30.15 17.82 L31.33 18.81 L30.20 20.38 L31.02 21.50 L31.02 21.50 L31.58 22.76 L33.50 22.57 L33.77 24.09 L31.90 24.57 L31.80 25.95 L31.80 25.95 L31.42 27.27 L33.02 28.37 L32.25 29.70 L30.50 28.86 L29.54 29.86 L29.54 29.86 L28.40 30.63 L28.92 32.49 L27.47 33.02 L26.67 31.26 L25.30 31.40 L25.30 31.40 L23.93 31.26 L23.13 33.02 L21.68 32.49 L22.20 30.63 L21.06 29.86 L21.06 29.86 L20.10 28.86 L18.35 29.70 L17.58 28.37 L19.18 27.27 L18.80 25.95 L18.80 25.95 L18.70 24.57 L16.83 24.09 L17.10 22.57 L19.02 22.76 L19.58 21.50 L19.58 21.50 L20.40 20.38 L19.27 18.81 L20.45 17.82 L21.80 19.20 L23.04 18.60Z" fill="#03aa7a" stroke="#383838" stroke-width="1.2" stroke-linejoin="round"/><circle cx="25.3" cy="24.8" r="2.4" fill="none" stroke="#383838" stroke-width="1.2"/></svg>
<svg class="a" style="left:935px;top:122px;" width="50" height="50" viewBox="0 0 50 50"><path d="M24.9 28.5H15.5A6.3 6.3 0 0 1 18.3 16.6A8.6 8.6 0 0 1 34.6 15.9A6.6 6.6 0 0 1 41.8 24.3" fill="none" stroke="#383838" stroke-width="1.3"/>
<path d="M24 13h3.9v6.3h2.8l-4.7 5.6l-4.7-5.6h2.7z" fill="#383838"/>
<circle cx="33.8" cy="30.7" r="7.6" fill="#03aa7a" stroke="#383838" stroke-width="1.3"/><path d="M29.3 30.4l3.6 4.1l5.8-6" fill="none" stroke="#383838" stroke-width="1.6"/></svg>
</body></html>
